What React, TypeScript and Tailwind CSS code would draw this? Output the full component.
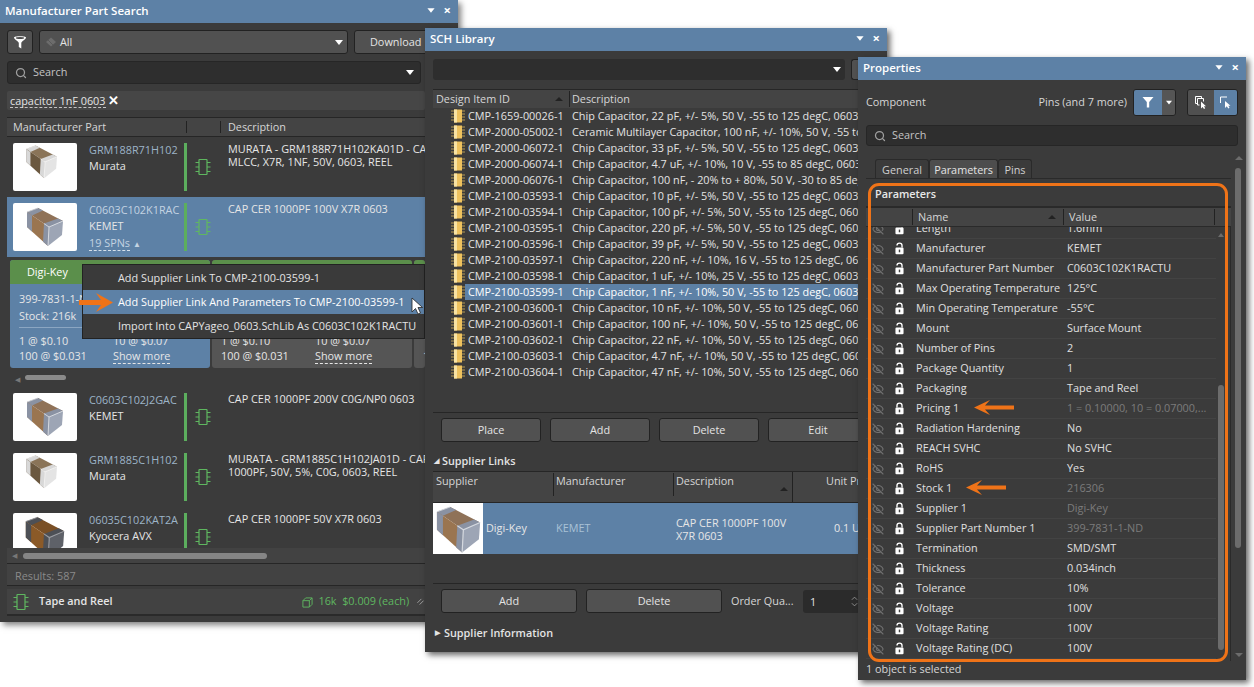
import { Search, EyeOff } from "lucide-react";

const libRows = [
  ["CMP-1659-00026-1", "Chip Capacitor, 22 pF, +/- 5%, 50 V, -55 to 125 degC, 0603"],
  ["CMP-2000-05002-1", "Ceramic Multilayer Capacitor, 100 nF, +/- 10%, 50 V, -55 to 125"],
  ["CMP-2000-06072-1", "Chip Capacitor, 33 pF, +/- 5%, 50 V, -55 to 125 degC, 0603"],
  ["CMP-2000-06074-1", "Chip Capacitor, 4.7 uF, +/- 10%, 10 V, -55 to 85 degC, 0603"],
  ["CMP-2000-06076-1", "Chip Capacitor, 100 nF, - 20% to + 80%, 50 V, -30 to 85 degC"],
  ["CMP-2100-03593-1", "Chip Capacitor, 10 pF, +/- 5%, 50 V, -55 to 125 degC, 0603"],
  ["CMP-2100-03594-1", "Chip Capacitor, 100 pF, +/- 5%, 50 V, -55 to 125 degC, 0603"],
  ["CMP-2100-03595-1", "Chip Capacitor, 220 pF, +/- 5%, 50 V, -55 to 125 degC, 0603"],
  ["CMP-2100-03596-1", "Chip Capacitor, 39 pF, +/- 5%, 50 V, -55 to 125 degC, 0603"],
  ["CMP-2100-03597-1", "Chip Capacitor, 220 nF, +/- 10%, 16 V, -55 to 125 degC, 0603"],
  ["CMP-2100-03598-1", "Chip Capacitor, 1 uF, +/- 10%, 25 V, -55 to 125 degC, 0603"],
  ["CMP-2100-03599-1", "Chip Capacitor, 1 nF, +/- 10%, 50 V, -55 to 125 degC, 0603"],
  ["CMP-2100-03600-1", "Chip Capacitor, 10 nF, +/- 10%, 50 V, -55 to 125 degC, 0603"],
  ["CMP-2100-03601-1", "Chip Capacitor, 100 nF, +/- 10%, 50 V, -55 to 125 degC, 0603"],
  ["CMP-2100-03602-1", "Chip Capacitor, 22 nF, +/- 10%, 50 V, -55 to 125 degC, 0603"],
  ["CMP-2100-03603-1", "Chip Capacitor, 4.7 nF, +/- 10%, 50 V, -55 to 125 degC, 0603"],
  ["CMP-2100-03604-1", "Chip Capacitor, 47 nF, +/- 10%, 50 V, -55 to 125 degC, 0603"],
];

// name, value, locked/greyed
const params: [string, string, boolean][] = [
  ["Length", "1.6mm", false],
  ["Manufacturer", "KEMET", false],
  ["Manufacturer Part Number", "C0603C102K1RACTU", false],
  ["Max Operating Temperature", "125°C", false],
  ["Min Operating Temperature", "-55°C", false],
  ["Mount", "Surface Mount", false],
  ["Number of Pins", "2", false],
  ["Package Quantity", "1", false],
  ["Packaging", "Tape and Reel", false],
  ["Pricing 1", "1 = 0.10000, 10 = 0.07000,...", true],
  ["Radiation Hardening", "No", false],
  ["REACH SVHC", "No SVHC", false],
  ["RoHS", "Yes", false],
  ["Stock 1", "216306", true],
  ["Supplier 1", "Digi-Key", true],
  ["Supplier Part Number 1", "399-7831-1-ND", true],
  ["Termination", "SMD/SMT", false],
  ["Thickness", "0.034inch", false],
  ["Tolerance", "10%", false],
  ["Voltage", "100V", false],
  ["Voltage Rating", "100V", false],
  ["Voltage Rating (DC)", "100V", false],
];

const kemet = { body: "#9a7550", top: "#8f7258", cap: "#8a92a3", end: "#9da5b5", edge: "#d5d9e0" };
const murata = { body: "#6b583f", top: "#8a7458", cap: "#d8d8d8", end: "#e4e4e4", edge: "#f4f4f4" };
const kyocera = { body: "#8b5a28", top: "#7a5026", cap: "#4d5056", end: "#5e6168", edge: "#9a9ca2" };

function Cap({ c = kemet, box = "0 0 64 48", cls = "w-[64px] h-[48px]" }) {
  return (
    <svg viewBox={box} className={cls}>
      <polygon points="14,9 25,5 50,18 36,24" fill={c.top} />
      <polygon points="14,9 25,5 30,7.6 19,12.4" fill={c.cap} />
      <polygon points="45,15.4 50,18 36,24 31,20.6" fill={c.cap} />
      <polygon points="14,9 36,24 35,43 14,24" fill={c.body} />
      <polygon points="14,9 19,12.4 19,28.5 14,24" fill={c.cap} />
      <polygon points="31,20.6 36,24 35,43 30,38.8" fill={c.cap} />
      <polygon points="36,24 50,18 49,32 35,43" fill={c.end} />
      <polyline points="31,20.6 36,24 50,18" stroke={c.edge} strokeWidth="1" fill="none" />
      <polyline points="36,24 35,43" stroke={c.edge} strokeWidth="1" fill="none" />
      <polyline points="14,9 25,5" stroke={c.edge} strokeWidth="0.8" fill="none" />
    </svg>
  );
}

function Chip({ cls = "w-[16px] h-[18px]" }) {
  return (
    <svg viewBox="0 0 16 18" className={cls} fill="none" stroke="#5fb760" strokeWidth="1.2">
      <rect x="4" y="1.5" width="8" height="15" rx="0.5" />
      <path d="M0.5 4.5h3.5M0.5 9h3.5M0.5 13.5h3.5M12 4.5h3.5M12 9h3.5M12 13.5h3.5" />
    </svg>
  );
}

function LibIcon() {
  return (
    <svg viewBox="0 0 14 14" className="w-[14px] h-[14px] shrink-0">
      <path d="M0 2h3M0 5h3M0 8h3M0 11h3M11 2h3M11 5h3M11 8h3M11 11h3" stroke="#b79a52" strokeWidth="1" />
      <rect x="3" y="0.5" width="8" height="13" fill="#eec25e" />
      <rect x="3" y="0.5" width="3" height="13" fill="#f8e3a4" />
    </svg>
  );
}

function Funnel({ cls = "w-[14px] h-[14px]" }) {
  return (
    <svg viewBox="0 0 14 14" className={cls}>
      <path d="M1 2.6C1 0.8 13 0.8 13 2.6C13 4.2 8.8 6.4 8.3 7.8V13.4L5.8 12V7.8C5.2 6.4 1 4.2 1 2.6Z" fill="#fff" />
      <ellipse cx="7" cy="3" rx="4.2" ry="1" fill="#4e4e4e" />
    </svg>
  );
}

function Caret({ cls = "" }) {
  return <span className={`inline-block w-0 h-0 border-x-[4.5px] border-x-transparent border-t-[5px] border-t-white ${cls}`} />;
}

function SortUp() {
  return <span className="w-0 h-0 border-x-[4px] border-x-transparent border-b-[4px] border-b-[#222]" />;
}

function Lock({ closed }: { closed: boolean }) {
  return (
    <svg viewBox="0 0 10 14" className="w-[9px] h-[13px]">
      <path
        d={closed ? "M2.2 6V3.8a2.8 2.8 0 0 1 5.6 0V6" : "M2.2 3.8a2.8 2.8 0 0 1 5.6 0V6"}
        fill="none"
        stroke="#fff"
        strokeWidth="1.5"
      />
      <rect x="0.5" y="6" width="9" height="7.5" rx="1.2" fill="#fff" />
      <rect x="4.2" y="8.2" width="1.6" height="3" fill="#444" />
    </svg>
  );
}

function TitleBar({ title }: { title: string }) {
  return (
    <div className="h-[23px] pb-[2px] bg-[#5d81a6] flex items-center pl-[5px] shrink-0 text-white font-semibold text-[11.5px]">
      <span className="flex-1">{title}</span>
      <Caret cls="mr-[9px] scale-90" />
      <span className="mr-[7px] text-[13px] font-bold leading-none">×</span>
    </div>
  );
}

function Btn({ children, cls = "" }: { children: React.ReactNode; cls?: string }) {
  return (
    <button className={`h-[24px] rounded-[3px] border border-[#222] bg-[#515151] text-[#e4e4e4] shrink-0 ${cls}`}>
      {children}
    </button>
  );
}

function SearchBox({ cls = "h-[23px]", caret = false }: { cls?: string; caret?: boolean }) {
  return (
    <div className={`rounded-[3px] bg-[#2e2e2e] border border-[#262626] flex items-center pl-[7px] pr-[6px] text-[#c4c4c4] ${cls}`}>
      <Search size={12} strokeWidth={2.5} className="text-[#a0a0a0]" />
      <span className="ml-[6px] flex-1">Search</span>
      {caret && <Caret />}
    </div>
  );
}

function PartRow({
  part,
  maker,
  lines,
  selected = false,
  tall = false,
  cap,
}: {
  part: string;
  maker: string;
  lines: string[];
  selected?: boolean;
  tall?: boolean;
  cap: React.ReactNode;
}) {
  return (
    <div className={`h-[60px] pt-[6px] flex shrink-0 ${selected ? "bg-[#5d81a6]" : ""}`}>
      <div className="ml-[6px] w-[64px] h-[48px] bg-white rounded-[2px] overflow-hidden shrink-0">{cap}</div>
      <div className="ml-[12px] -mt-[1px] w-[95px] shrink-0 leading-[16px] whitespace-nowrap overflow-hidden">
        <div className={selected ? "text-[#c3d3e2]" : "text-[#9db4c8]"}>{part}</div>
        <div className="text-[#e6e6e6]">{maker}</div>
        {tall && (
          <div className="text-[#c3d3e2] mt-[1px]">
            <span className="border-b border-dashed border-[#d5e0ea]">19 SPNs</span>
            <span className="text-[8px] ml-[3px]">▲</span>
          </div>
        )}
      </div>
      <div className="w-[3px] h-[48px] bg-[#5cae5e] shrink-0" />
      <div className="w-[41px] pl-[8px] pt-[15px] shrink-0">
        <Chip />
      </div>
      <div className="flex-1 -mt-[1px] overflow-hidden leading-[13px] whitespace-nowrap text-[#e6e6e6]">
        {lines.map((l) => (
          <div key={l}>{l}</div>
        ))}
      </div>
    </div>
  );
}

function SupplierCard({ active = false, cls = "w-[200px]" }: { active?: boolean; cls?: string }) {
  return (
    <div className={`${cls} h-[108px] rounded-[3px] overflow-hidden shrink-0 ${active ? "bg-[#5d81a6]" : "bg-[#555]"}`}>
      <div className="h-[24px] bg-[#5b8f4b] pl-[17px] leading-[24px] text-white">Digi-Key</div>
      <div className="pt-[6px] px-[9px] leading-[17px] text-[#e6e6e6] whitespace-nowrap">
        <div>399-7831-1-ND</div>
        <div className="mb-[3px]">Stock: 216k</div>
        <div className="border-t border-[#8ba6c2] pt-[6px] grid grid-cols-[94px_1fr] leading-[14.5px]">
          <span>1 @ $0.10</span>
          <span>10 @ $0.07</span>
          <span>100 @ $0.031</span>
          <span>
            <span className="border-b border-dashed border-[#e6e6e6]">Show more</span>
          </span>
        </div>
      </div>
    </div>
  );
}

function PartSearch() {
  return (
    <div className="absolute left-0 top-0 w-[458px] h-[622px] bg-[#3b3b3b] flex flex-col overflow-hidden shadow-[3px_3px_6px_rgba(0,0,0,0.5)]">
      <TitleBar title="Manufacturer Part Search" />
      <div className="mt-[7px] ml-[7px] w-[418px] flex gap-[6px] shrink-0 overflow-hidden">
        <Btn cls="w-[26px] flex items-center justify-center">
          <Funnel />
        </Btn>
        <div className="w-[309px] h-[24px] shrink-0 rounded-[3px] border border-[#222] bg-[#515151] flex items-center pl-[5px] pr-[4px] text-[#e4e4e4]">
          <svg viewBox="0 0 12 12" className="w-[12px] h-[12px] mr-[3px]">
            <path d="M1 6 L6 1.5 L11 6 L6 10.5 Z" fill="#6c6c6c" />
            <path d="M3 4 L8 9" stroke="#585858" />
          </svg>
          <span className="flex-1">All</span>
          <Caret />
        </div>
        <Btn cls="w-[100px] text-left pl-[15px]">Download</Btn>
      </div>
      <div className="mt-[7px] ml-[7px] w-[414px] shrink-0">
        <SearchBox caret />
      </div>
      <div className="mt-[7px] ml-[7px] w-[418px] h-[19px] bg-[#464646] rounded-[2px] pl-[3px] flex items-center gap-[2px] text-[#e4e4e4] shrink-0">
        <span className="border-b border-dashed border-[#c4c4c4] leading-[13px]">capacitor 1nF 0603</span>
        <span className="font-bold text-[13px] leading-none text-white">✕</span>
      </div>
      <div className="mt-[7px] ml-[7px] flex-1 min-h-0 w-[418px] flex flex-col overflow-hidden">
        <div className="h-[20px] border-y border-[#262626] bg-[#444] flex items-center text-[#d6d6d6] shrink-0">
          <span className="w-[179px] pl-[6px]">Manufacturer Part</span>
          <span className="w-[35px] h-[12px] border-x border-[#222]" />
          <span className="pl-[7px]">Description</span>
        </div>
        <PartRow
          part="GRM188R71H102"
          maker="Murata"
          lines={["MURATA - GRM188R71H102KA01D - CAP", "MLCC, X7R, 1NF, 50V, 0603, REEL"]}
          cap={<Cap c={murata} box="-1 2 74 56" />}
        />
        <PartRow
          selected
          tall
          part="C0603C102K1RAC"
          maker="KEMET"
          lines={["CAP CER 1000PF 100V X7R 0603"]}
          cap={<Cap />}
        />
        <div className="relative h-[130px] shrink-0 overflow-hidden">
          <div className="pt-[3px] pl-[3px] flex gap-[2px]">
            <SupplierCard active />
            <SupplierCard />
            <SupplierCard cls="w-[11px]" />
          </div>
          <div className="mt-[7px] ml-[18px] w-[41px] h-[5px] rounded-full bg-[#8a8a8a]" />
          <span className="absolute left-[8px] top-[118px] text-[7px] text-[#777]">◀</span>
        </div>
        <PartRow
          part="C0603C102J2GAC"
          maker="KEMET"
          lines={["CAP CER 1000PF 200V C0G/NP0 0603"]}
          cap={<Cap />}
        />
        <PartRow
          part="GRM1885C1H102"
          maker="Murata"
          lines={["MURATA - GRM1885C1H102JA01D - CAP", "1000PF, 50V, 5%, C0G, 0603, REEL"]}
          cap={<Cap c={murata} box="-1 2 74 56" />}
        />
        <div className="h-[41px] overflow-hidden shrink-0">
          <PartRow
            part="06035C102KAT2A"
            maker="Kyocera AVX"
            lines={["CAP CER 1000PF 50V X7R 0603"]}
            cap={<Cap c={kyocera} box="2 1 60 45" />}
          />
        </div>
        <div className="relative h-[15px] bg-[#424242] flex items-center shrink-0">
          <span className="absolute left-[5px] top-[3px] text-[7px] text-[#777]">◀</span>
          <span className="ml-[16px] w-[244px] h-[6px] rounded-full bg-[#858585]" />
        </div>
        <div className="h-[23px] border-y border-[#262626] bg-[#424242] pl-[8px] leading-[23px] text-[#8a8a8a] shrink-0">Results: 587</div>
        <div className="mt-[3px] h-[27px] border-b-2 border-[#2a2a2a] bg-[#424242] flex items-center pl-[6px] shrink-0 whitespace-nowrap overflow-hidden">
          <Chip />
          <span className="ml-[10px] font-semibold text-[#e6e6e6]">Tape and Reel</span>
          <svg viewBox="0 0 12 12" className="w-[11px] h-[11px] ml-[190px] mt-[2px]" fill="none" stroke="#5fb760">
            <path d="M1 4h7v7H1zM1 4l3-3h7v7l-3 3M8 4l3-3" />
          </svg>
          <span className="ml-[5px] text-[#5fb760]">16k&nbsp;&nbsp;$0.009 (each)</span>
          <svg viewBox="0 0 8 8" className="w-[7px] h-[7px] ml-[8px] shrink-0" stroke="#aaa" fill="none">
            <path d="M0.5 5.5L5 1M3 7.5L7.5 3" />
          </svg>
        </div>
      </div>
      <div className="absolute left-[82px] top-[264px] w-[343px] h-[75px] bg-[#3a3a3a] border border-[#222] py-[1px] text-[#e4e4e4] whitespace-nowrap overflow-hidden">
        <div className="h-[24px] pl-[35px] leading-[24px]">Add Supplier Link To CMP-2100-03599-1</div>
        <div className="h-[24px] pl-[35px] leading-[24px] bg-[#5d81a6] text-white">Add Supplier Link And Parameters To CMP-2100-03599-1</div>
        <div className="h-[24px] pl-[35px] leading-[24px]">Import Into CAPYageo_0603.SchLib As C0603C102K1RACTU</div>
      </div>
      <svg viewBox="0 0 34 19" className="absolute left-[79px] top-[293px] w-[34px] h-[19px]">
        <path d="M34 9.5 L17 0 L22 7 H0 V12 H22 L17 19 Z" fill="#ef7318" />
      </svg>
      <svg viewBox="0 0 12 18" className="absolute left-[411px] top-[297px] w-[12px] h-[18px]">
        <path d="M1 1 V15 L4.5 11.5 L7 17 L9.5 16 L7 10.5 H11.5 Z" fill="#fff" stroke="#222" strokeWidth="0.8" />
      </svg>
    </div>
  );
}

function SchLibrary() {
  return (
    <div className="absolute left-[425px] top-[28px] w-[462px] h-[624px] bg-[#3b3b3b] flex flex-col overflow-hidden shadow-[3px_3px_6px_rgba(0,0,0,0.6)]">
      <TitleBar title="SCH Library" />
      <div className="mt-[8px] ml-[8px] flex gap-[6px] shrink-0">
        <div className="h-[21px] w-[412px] rounded-[3px] bg-[#2e2e2e] flex items-center justify-end pr-[4px]">
          <Caret />
        </div>
        <div className="h-[21px] w-[7px] rounded-l-[3px] border border-r-0 border-[#222] bg-[#515151]" />
      </div>
      <div className="mt-[9px] ml-[8px] h-[324px] w-[425px] border-y border-[#262626] flex flex-col overflow-hidden shrink-0">
        <div className="h-[18px] bg-[#444] flex items-center text-[#d6d6d6] shrink-0">
          <span className="w-[136px] pl-[3px] flex items-center pr-[6px]">
            <span className="flex-1">Design Item ID</span>
            <SortUp />
          </span>
          <span className="border-l border-[#222] pl-[2px]">Description</span>
        </div>
        {libRows.map(([id, desc], i) => (
          <div key={id} className="h-[16px] flex items-center whitespace-nowrap text-[#e4e4e4] shrink-0 pl-[18px]">
            <LibIcon />
            <div className={`h-[16px] leading-[16px] flex flex-1 min-w-0 ${i === 11 ? "bg-[#5d81a6] text-white" : ""}`}>
              <span className="w-[107px] pl-[3px] shrink-0">{id}</span>
              <span className="flex-1 min-w-0 overflow-hidden">{desc}</span>
            </div>
          </div>
        ))}
      </div>
      <div className="mt-[5px] ml-[16px] flex gap-[9px] shrink-0">
        {["Place", "Add", "Delete", "Edit"].map((b) => (
          <Btn key={b} cls="w-[100px]">{b}</Btn>
        ))}
      </div>
      <div className="mt-[11px] ml-[9px] flex items-center h-[16px] font-semibold text-[#e4e4e4] shrink-0">
        <span className="text-[7px] mr-[3px]">◢</span>Supplier Links
      </div>
      <div className="mt-[2px] ml-[8px] h-[113px] w-[425px] border-y border-[#262626] shrink-0 overflow-hidden">
        <div className="h-[31px] bg-[#444] flex border-b border-[#262626] text-[#d6d6d6]">
          <span className="w-[120px] pl-[3px] pt-[1px]">Supplier</span>
          <span className="w-[120px] h-[23px] mt-[4px] border-l border-[#222] pl-[2px] -translate-y-[3px]">Manufacturer</span>
          <span className="w-[119px] h-[23px] mt-[4px] border-l border-[#222] pl-[2px] -translate-y-[3px] flex">
            <span className="flex-1">Description</span>
            <span className="mt-[14px] mr-[4px] flex">
              <SortUp />
            </span>
          </span>
          <span className="flex-1 min-w-0 overflow-hidden border-l border-[#222] pl-[33px] pt-[1px] whitespace-nowrap">Unit Price</span>
        </div>
        <div className="h-[51px] bg-[#5d81a6] flex items-center text-[#e6e6e6]">
          <div className="w-[50px] h-[51px] bg-white shrink-0">
            <Cap box="10.7 1.7 41.7 42.5" cls="w-[50px] h-[51px]" />
          </div>
          <span className="w-[72px] pl-[3px] shrink-0">Digi-Key</span>
          <span className="w-[120px] pl-[1px] text-[#a9c1d6] shrink-0">KEMET</span>
          <span className="w-[119px] leading-[13px] shrink-0 pl-[1px]">CAP CER 1000PF 100V X7R 0603</span>
          <span className="flex-1 min-w-0 overflow-hidden pl-[40px] whitespace-nowrap">0.1 USD</span>
        </div>
      </div>
      <div className="mt-[5px] ml-[16px] flex items-center shrink-0">
        <Btn cls="w-[136px]">Add</Btn>
        <Btn cls="w-[136px] ml-[9px]">Delete</Btn>
        <span className="ml-[9px] text-[#d6d6d6] w-[72px] shrink-0">Order Qua...</span>
        <div className="h-[23px] w-[57px] rounded-[3px] bg-[#2b2b2b] pl-[7px] pr-[2px] leading-[23px] text-[#e4e4e4] shrink-0 flex items-center justify-between">
          <span>1</span>
          <svg viewBox="0 0 8 14" className="w-[7px] h-[13px]" fill="none" stroke="#999">
            <path d="M1 5l3-3 3 3M1 9l3 3 3-3" />
          </svg>
        </div>
      </div>
      <div className="mt-[12px] ml-[10px] flex items-center h-[16px] font-semibold text-[#e4e4e4] shrink-0">
        <span className="text-[7px] mr-[4px]">▶</span>Supplier Information
      </div>
    </div>
  );
}

function Properties() {
  return (
    <div className="absolute left-[858px] top-[57px] w-[388px] h-[623px] bg-[#3b3b3b] flex flex-col overflow-hidden shadow-[3px_3px_6px_rgba(0,0,0,0.6)]">
      <TitleBar title="Properties" />
      <div className="mt-[9px] h-[26px] flex items-center pl-[8px] shrink-0">
        <span className="flex-1 text-[#d6d6d6]">Component</span>
        <span className="text-[#d6d6d6] mr-[6px]">Pins (and 7 more)</span>
        <div className="h-[27px] w-[43px] rounded-[3px] border border-[#222] flex overflow-hidden">
          <div className="w-[28px] bg-[#5d81a6] flex items-center justify-center">
            <svg viewBox="0 0 12 12" className="w-[12px] h-[12px]">
              <path d="M0.5 1H11.5L7.2 6V11.5H4.8V6Z" fill="#fff" />
            </svg>
          </div>
          <div className="flex-1 bg-[#555] flex items-center justify-center">
            <Caret cls="scale-75" />
          </div>
        </div>
        <div className="ml-[11px] mr-[8px] h-[27px] w-[51px] rounded-[3px] border border-[#222] flex overflow-hidden">
          <div className="w-[26px] bg-[#505050] flex items-center justify-center">
            <svg viewBox="0 0 14 14" className="w-[14px] h-[14px]" fill="none" stroke="#fff">
              <path d="M1.5 1.5h6v2M1.5 1.5v7h2M3.5 3.5h6v3M3.5 3.5v6.5h2" />
              <path d="M7 6.5 V13.5 L8.6 12 L10 14 L11.2 13.3 L9.9 11.3 H12 Z" fill="#fff" stroke="none" />
            </svg>
          </div>
          <div className="flex-1 bg-[#5d81a6] flex items-center justify-center">
            <svg viewBox="0 0 14 14" className="w-[14px] h-[14px]" fill="none" stroke="#fff">
              <path d="M8 2H1.5v6" />
              <path d="M6 6 V13 L7.8 11.3 L9.3 13.5 L10.5 12.8 L9.3 10.8 H11.5 Z" fill="#fff" stroke="none" />
            </svg>
          </div>
        </div>
      </div>
      <div className="mt-[10px] ml-[8px] w-[372px] shrink-0">
        <SearchBox cls="h-[21px]" />
      </div>
      <div className="flex flex-1 min-h-0 mt-[12px]">
        <div className="w-[365px] ml-[8px] flex flex-col min-h-0 shrink-0">
          <div className="h-[21px] flex items-end pl-[9px] border-b border-[#2a2a2a] shrink-0 text-[#d0d0d0]">
            <span className="h-[19px] w-[54px] border border-b-0 border-[#2a2a2a] rounded-t-[3px] text-center leading-[20px]">General</span>
            <span className="h-[19px] w-[69px] bg-[#4d4d4d] border border-b-0 border-[#2a2a2a] rounded-t-[3px] text-center leading-[20px] text-[#e4e4e4]">Parameters</span>
            <span className="h-[19px] w-[34px] border border-b-0 border-[#2a2a2a] rounded-t-[3px] text-center leading-[20px]">Pins</span>
          </div>
          <div className="h-[28px] pl-[9px] font-semibold leading-[30px] text-[#e8e8e8] border-b border-[#2a2a2a] shrink-0">Parameters</div>
          <div className="h-[20px] bg-[#444] border-y border-[#2a2a2a] flex items-center text-[#d6d6d6] shrink-0">
            <span className="w-[46px] h-[12px]" />
            <span className="w-[151px] border-l border-[#222] pl-[5px] flex items-center pr-[7px]">
              <span className="flex-1">Name</span>
              <SortUp />
            </span>
            <span className="w-[152px] border-x border-[#222] pl-[5px]">Value</span>
          </div>
          <div className="flex-1 min-h-0 overflow-hidden border-r border-[#2a2a2a]">
            <div className="-mt-[8px] w-[350px]">
              {params.map(([n, v, l]) => (
                <div key={n} className="h-[20px] flex items-center border-b border-[#434343] whitespace-nowrap">
                  <EyeOff size={12} strokeWidth={2.2} className="ml-[6px] text-[#6f6f6f] shrink-0" />
                  <span className="ml-[11px] flex w-[9px] shrink-0">
                    <Lock closed={l} />
                  </span>
                  <span className="ml-[12px] w-[151px] text-[#e0e0e0] shrink-0">{n}</span>
                  <span className={l ? "text-[#7c7c7c]" : "text-[#e0e0e0]"}>{v}</span>
                </div>
              ))}
            </div>
          </div>
        </div>
        <div className="w-[15px] relative shrink-0">
          <span className="absolute left-[4px] top-[10px] w-[6px] h-[380px] rounded-full bg-[#6c6c6c]" />
          <span className="absolute left-[4px] top-[-2px] w-0 h-0 border-x-[4px] border-x-transparent border-b-[4px] border-b-[#6c6c6c]" />
          <span className="absolute left-[4px] bottom-[4px] w-0 h-0 border-x-[4px] border-x-transparent border-t-[4px] border-t-[#6c6c6c]" />
          <span className="absolute -left-[13px] top-[227px] w-[6px] h-[265px] rounded-full bg-[#6c6c6c]" />
          <span className="absolute -left-[13px] top-[75px] w-0 h-0 border-x-[3px] border-x-transparent border-b-[4px] border-b-[#6c6c6c]" />
        </div>
      </div>
      <div className="h-[19px] pl-[8px] leading-[16px] text-[#d6d6d6] shrink-0">1 object is selected</div>
      <div className="absolute left-[10px] top-[126px] w-[360px] h-[479px] border-[3px] border-[#ef7318] rounded-[11px] pointer-events-none" />
      <svg viewBox="0 0 40 15" className="absolute left-[116px] top-[343px] w-[40px] h-[15px]">
        <path d="M0 7.5 L16 0 L11 5.5 H40 V9.5 H11 L16 15 Z" fill="#ef7318" />
      </svg>
      <svg viewBox="0 0 40 15" className="absolute left-[108px] top-[423px] w-[40px] h-[15px]">
        <path d="M0 7.5 L16 0 L11 5.5 H40 V9.5 H11 L16 15 Z" fill="#ef7318" />
      </svg>
    </div>
  );
}

export default function App() {
  return (
    <div className="relative w-[1254px] h-[687px] bg-white overflow-hidden font-['Open_Sans','Noto_Sans',sans-serif] text-[10.85px]">
      <PartSearch />
      <SchLibrary />
      <Properties />
    </div>
  );
}
